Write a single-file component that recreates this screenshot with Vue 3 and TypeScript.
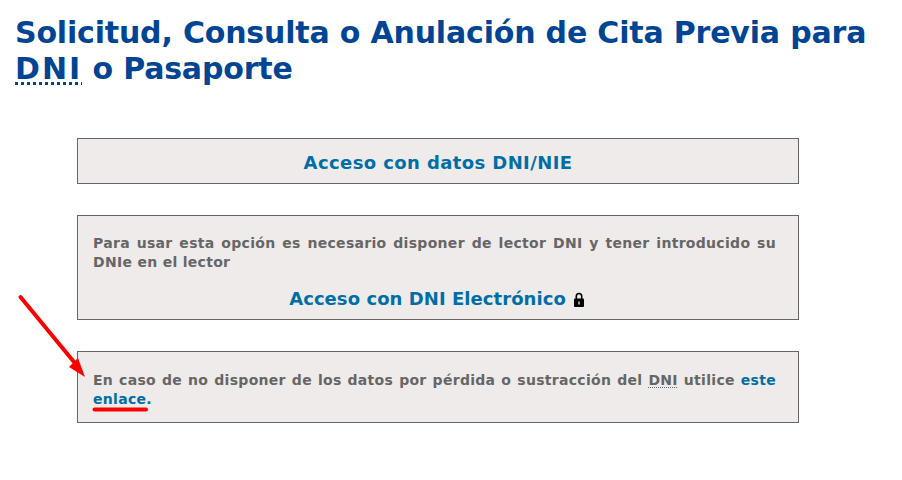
<script setup lang="ts">
const title = "Solicitud, Consulta o Anulación de Cita Previa para";
</script>

<template>
  <main class="page">
    <h1 class="title">{{ title }} <abbr class="abbr-title">DNI</abbr> o Pasaporte</h1>
    <section class="boxes">
      <div class="box box-single"><a class="action action-wide">Acceso con datos DNI/NIE</a></div>
      <div class="box box-dnie">
        <p class="note">Para usar esta opción es necesario disponer de lector DNI y tener introducido su DNIe en el lector</p>
        <div class="action-row">
          <a class="action action-slim">Acceso con DNI Electrónico</a>
          <svg class="lock" viewBox="0 0 12 15" width="12" height="15" aria-hidden="true">
            <path d="M3.3 7V4.2a2.7 2.7 0 0 1 5.4 0V7" fill="none" stroke="#000" stroke-width="1.6" />
            <rect x="1" y="6.5" width="10" height="8.5" rx="1" fill="#000" />
            <rect x="5.4" y="9.5" width="1.2" height="3" fill="#fff" />
          </svg>
        </div>
      </div>
      <div class="box box-lost">
        <p class="note">En caso de no disponer de los datos por pérdida o sustracción del <abbr class="abbr-note">DNI</abbr> utilice <a class="link">este enlace.</a></p>
      </div>
    </section>
    <svg class="annotation" width="902" height="480" viewBox="0 0 902 480" aria-hidden="true">
      <path d="M20.5 297 L74 362" stroke="#f00" stroke-width="4" stroke-linecap="round" fill="none" />
      <path d="M85 377 L69 367 L78 358 Z" fill="#f00" />
      <path d="M94.5 409.5 H146" stroke="#f00" stroke-width="4" stroke-linecap="round" fill="none" />
    </svg>
  </main>
</template>

<style>
html, body { margin: 0; background: #fff; }
</style>

<style scoped>
.page {
  position: relative;
  width: 902px;
  height: 480px;
  overflow: hidden;
  font-family: "DejaVu Sans", Verdana, sans-serif;
}
.title {
  margin: 0;
  padding: 15px 20px 0 15px;
  height: 138px;
  box-sizing: border-box;
  font-size: 30px;
  line-height: 36px;
  font-weight: 700;
  letter-spacing: -0.18px;
  color: #004494;
}
.abbr-title {
  letter-spacing: 2px;
  text-decoration: underline dotted #004494 3px;
  text-underline-offset: 3px;
}
.boxes {
  display: flex;
  flex-direction: column;
  gap: 31px;
  margin-left: 77px;
  width: 722px;
}
.box {
  box-sizing: border-box;
  border: 1px solid #666;
  background: #efebea;
  padding: 0 22px 0 15px;
}
.box-single {
  height: 46px;
  display: flex;
  align-items: center;
  justify-content: center;
  padding: 4px 15px 0;
}
.box-dnie {
  height: 105px;
  padding-top: 18px;
}
.box-lost {
  height: 72px;
  padding-top: 19px;
}
.note {
  margin: 0;
  font-size: 14px;
  line-height: 19px;
  font-weight: 700;
  letter-spacing: 0.3px;
  color: #666;
  text-align: justify;
}
.action-row {
  margin-top: 15px;
  display: flex;
  align-items: center;
  justify-content: center;
  gap: 7px;
  margin-right: -5px;
}
.action {
  font-size: 18px;
  line-height: 24px;
  font-weight: 700;
  color: #006ea6;
}
.action-wide { letter-spacing: 0.4px; }
.action-slim { letter-spacing: 0.06px; }
.lock { display: block; }
.link { color: #006ea6; }
.abbr-note {
  text-decoration: underline dotted #666 1px;
  text-underline-offset: 2px;
}
.annotation {
  position: absolute;
  left: 0;
  top: 0;
  pointer-events: none;
}
</style>
